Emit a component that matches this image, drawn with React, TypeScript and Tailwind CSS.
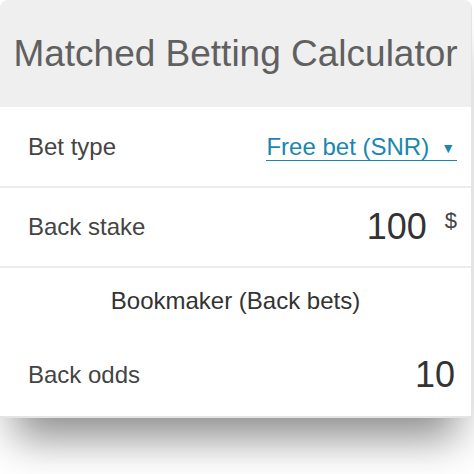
export default function App() {
  return (
    <div className="w-[474px] h-[474px] bg-white overflow-hidden" style={{ fontFamily: '"Liberation Sans", Arial, sans-serif' }}>
      <div className="w-[472px] bg-white rounded-t-lg border-r border-b-2 border-[#e4e4e4] shadow-[0_34px_40px_-14px_rgba(0,0,0,0.45)]">
        <div className="h-[107px] bg-[#efefef] rounded-t-lg flex items-center justify-center">
          <h1 className="text-[37px] text-[#606060]">Matched Betting Calculator</h1>
        </div>

        <div className="h-[81px] pl-[28px] pr-[14px] flex items-center justify-between border-b-2 border-[#ececec]">
          <span className="text-[24px] text-[#444]">Bet type</span>
          <a href="#" className="flex items-center gap-[12px] text-[24px] leading-[26px] text-[#1a87b0] border-b border-[#1a87b0] mt-[2px]">
            <span>Free bet (SNR)</span>
            <span className="text-[14px] leading-none mt-[1px] pr-[2px]">▼</span>
          </a>
        </div>

        <div className="h-[80px] pl-[28px] pr-[14px] flex items-center justify-between border-b-2 border-[#ececec]">
          <span className="text-[24px] text-[#444]">Back stake</span>
          <div className="flex items-start gap-[18px]">
            <span className="text-[36px] text-[#333] leading-none">100</span>
            <span className="text-[22px] text-[#444] leading-none mt-[1px]">$</span>
          </div>
        </div>

        <div>
          <div className="h-[66px] flex items-center justify-center">
            <span className="text-[24px] text-[#333]">Bookmaker (Back bets)</span>
          </div>
          <div className="h-[82px] pl-[28px] pr-[16px] flex items-center justify-between">
            <span className="text-[24px] text-[#444]">Back odds</span>
            <span className="text-[36px] text-[#333] leading-none">10</span>
          </div>
        </div>
      </div>
    </div>
  );
}
